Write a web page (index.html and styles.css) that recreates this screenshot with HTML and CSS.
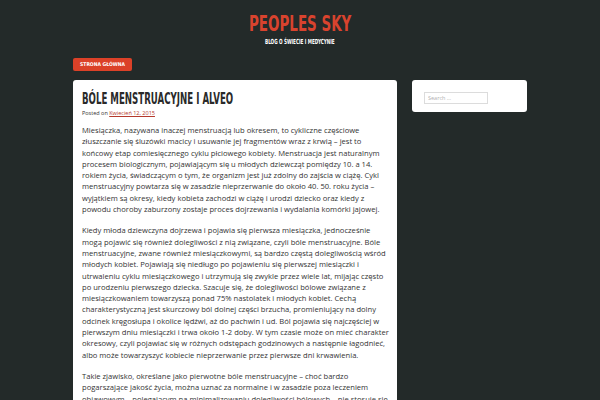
FILE: index.html
```html
<!DOCTYPE html>
<html lang="pl">
<head>
<meta charset="utf-8">
<title>Peoples Sky</title>
<link rel="stylesheet" href="styles.css">
</head>
<body>
<header class="site-header">
  <h1 class="site-title"><span class="narrow-c">Peoples Sky</span></h1>
  <p class="site-desc"><span class="narrow-c">Blog o świecie i medycynie</span></p>
</header>
<nav class="nav">
  <a class="nav-btn" href="#">Strona główna</a>
</nav>
<div class="layout">
  <main class="post">
    <h2 class="post-title"><span class="narrow-l">Bóle menstruacyjne i Alveo</span></h2>
    <p class="meta">Posted on <a href="#">Kwiecień 12, 2015</a></p>
    <p>Miesiączka, nazywana inaczej menstruacją lub okresem, to cykliczne częściowe złuszczanie się śluzówki macicy i usuwanie jej fragmentów wraz z krwią – jest to końcowy etap comiesięcznego cyklu płciowego kobiety. Menstruacja jest naturalnym procesem biologicznym, pojawiającym się u młodych dziewcząt pomiędzy 10. a 14. rokiem życia, świadczącym o tym, że organizm jest już zdolny do zajścia w ciążę. Cykl menstruacyjny powtarza się w zasadzie nieprzerwanie do około 40. 50. roku życia – wyjątkiem są okresy, kiedy kobieta zachodzi w ciążę i urodzi dziecko oraz kiedy z powodu choroby zaburzony zostaje proces dojrzewania i wydalania komórki jajowej.</p>
    <p>Kiedy młoda dziewczyna dojrzewa i pojawia się pierwsza miesiączka, jednocześnie mogą pojawić się również dolegliwości z nią związane, czyli bóle menstruacyjne. Bóle menstruacyjne, zwane również miesiączkowymi, są bardzo częstą dolegliwością wśród młodych kobiet. Pojawiają się niedługo po pojawieniu się pierwszej miesiączki i utrwaleniu cyklu miesiączkowego i utrzymują się zwykle przez wiele lat, mijając często po urodzeniu pierwszego dziecka. Szacuje się, że dolegliwości bólowe związane z miesiączkowaniem towarzyszą ponad 75% nastolatek i młodych kobiet. Cechą charakterystyczną jest skurczowy ból dolnej części brzucha, promieniujący na dolny odcinek kręgosłupa i okolice lędźwi, aż do pachwin i ud. Ból pojawia się najczęściej w pierwszym dniu miesiączki i trwa około 1-2 doby. W tym czasie może on mieć charakter okresowy, czyli pojawiać się w różnych odstępach godzinowych a następnie łagodnieć, albo może towarzyszyć kobiecie nieprzerwanie przez pierwsze dni krwawienia.</p>
    <p>Takie zjawisko, określane jako pierwotne bóle menstruacyjne – choć bardzo pogarszające jakość życia, można uznać za normalne i w zasadzie poza leczeniem objawowym – polegającym na minimalizowaniu dolegliwości bólowych – nie stosuje się innych metod. Anatomiczną przyczyną powstawania tej dolegliwości u młodych kobiet są zbyt intensywne skurcze mięśni macicy pod wpływem miejscowo działającego hormonu.</p>
  </main>
  <aside class="sidebar">
    <input class="search" type="search" placeholder="Search …">
  </aside>
</div>
</body>
</html>
```
FILE: styles.css
```css
html, body {
  margin: 0;
  padding: 0;
  background: #232a29;
}
body {
  font-family: "Open Sans", "DejaVu Sans", sans-serif;
  color: #333;
}
.narrow-c {
  display: inline-block;
  transform-origin: center;
}
.narrow-l {
  display: inline-block;
  transform-origin: left center;
  white-space: nowrap;
}
.site-header {
  text-align: center;
  padding-top: 13px;
}
.site-title {
  margin: 0;
  font-family: "DejaVu Sans Condensed", sans-serif;
  font-weight: bold;
  font-size: 20.5px;
  line-height: 22px;
  color: #d8432e;
  text-transform: uppercase;
}
.site-title .narrow-c {
  transform: scaleX(0.73);
}
.site-desc {
  margin: 3px 0 0;
  font-family: "DejaVu Sans Condensed", sans-serif;
  font-weight: bold;
  font-size: 7px;
  line-height: 8px;
  color: #ffffff;
  text-transform: uppercase;
}
.site-desc .narrow-c {
  transform: scaleX(0.66);
}
.nav {
  display: flex;
  width: 454px;
  margin: 12px auto 0;
}
.nav-btn {
  display: block;
  width: 59px;
  height: 13px;
  line-height: 13px;
  text-align: center;
  background: #db4128;
  border-radius: 2px;
  color: #fff;
  text-decoration: none;
  font-family: "DejaVu Sans Condensed", sans-serif;
  font-weight: bold;
  font-size: 5px;
  text-transform: uppercase;
}
.layout {
  width: 454px;
  margin: 9px auto 0;
  display: flex;
  align-items: flex-start;
  gap: 15px;
}
.post {
  width: 310px;
  background: #fff;
  border-radius: 3px;
  padding: 8px 5px 20px 9px;
  font-size: 7.6px;
  line-height: 11.3px;
}
.post p {
  margin: 0 0 10px;
}
.post-title {
  margin: 2px 0 0;
  font-family: "DejaVu Sans Condensed", sans-serif;
  font-weight: bold;
  font-size: 15px;
  line-height: 18px;
  color: #2a2a2a;
  text-transform: uppercase;
}
.post-title .narrow-l {
  transform: scaleX(0.64);
}
.post .meta {
  margin: 0 0 7px;
  font-size: 5.5px;
  line-height: 10px;
}
.meta a {
  color: #b5392c;
}
.sidebar {
  width: 91px;
  background: #fff;
  border-radius: 3px;
  padding: 12px 12px 8px;
  height: 12px;
}
.search {
  display: block;
  box-sizing: border-box;
  width: 64px;
  height: 12px;
  margin: 0;
  padding: 0 3px;
  border: 1px solid #dcdcdc;
  font-family: "Open Sans", sans-serif;
  font-size: 5.5px;
  color: #999;
  outline: none;
  background: #fff;
}
.search::placeholder {
  color: #b0b0b0;
}
```
